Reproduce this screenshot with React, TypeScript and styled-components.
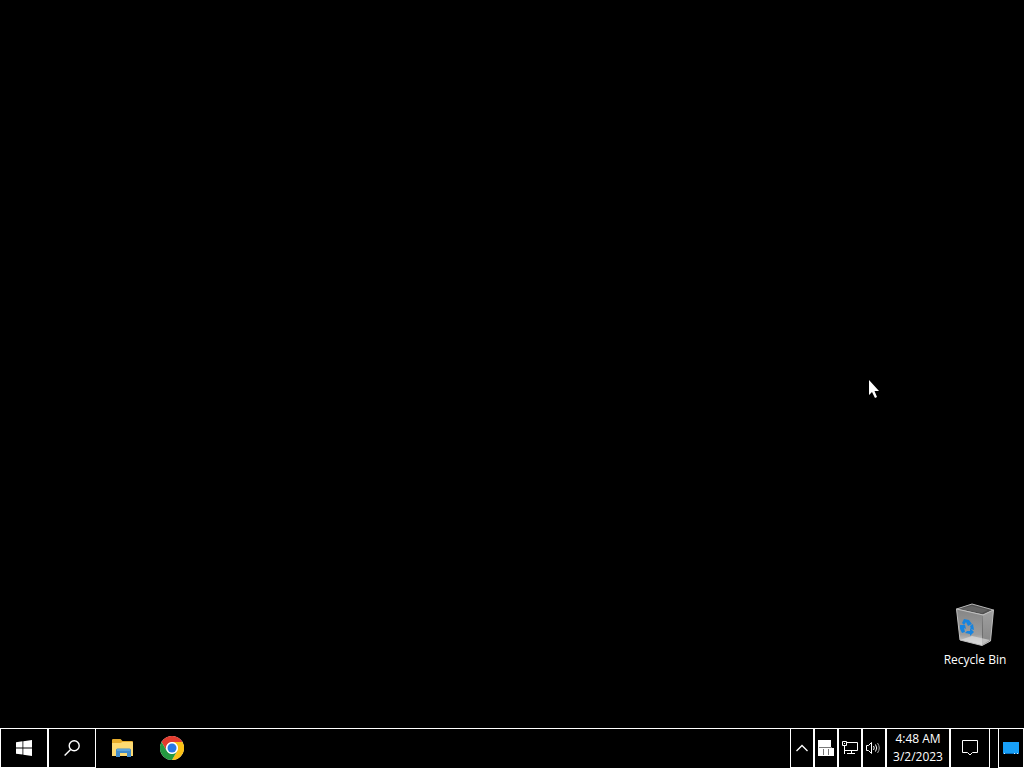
import React from "react";
import styled, { createGlobalStyle } from "styled-components";

const GlobalStyle = createGlobalStyle`
  * { box-sizing: border-box; }
  body { margin: 0; background: #000; overflow: hidden; }
  svg { display: block; }
`;

const Screen = styled.div`
  display: flex;
  flex-direction: column;
  min-height: 100vh;
  color: #fff;
  background: #000;
  font-family: "Open Sans", "Noto Sans", sans-serif;
  font-size: 12px;
  cursor: default;
`;

const Desktop = styled.main`
  position: relative;
  flex: 1;
`;

const DesktopItem = styled.button`
  position: absolute;
  right: 11px;
  bottom: 58px;
  display: flex;
  flex-direction: column;
  align-items: center;
  width: 76px;
  gap: 3px;
  padding: 0;
  border: 0;
  background: none;
  color: #fff;
  font: 12px/20px "Open Sans", "Noto Sans", sans-serif;
  white-space: nowrap;
`;

const Pointer = styled.svg`
  position: absolute;
  left: 868px;
  top: 379px;
`;

const Taskbar = styled.footer`
  display: flex;
  height: 40px;
  border-top: 1px solid #fff;
`;

const Cell = styled.button<{ $width: number }>`
  display: flex;
  align-items: center;
  justify-content: center;
  width: ${(p) => p.$width}px;
  padding: 0;
  border: solid #fff;
  border-width: 0 1px 1px;
  background: #000;
  color: #fff;
`;

const PinnedApps = styled.nav`
  display: flex;
  flex: 1;
  padding-left: 2px;
`;

const PinnedApp = styled.button`
  display: flex;
  align-items: center;
  justify-content: center;
  width: 49px;
  padding: 0 0 1px;
  border: 0;
  background: none;
`;

const Tray = styled.div`
  display: flex;
`;

const Clock = styled(Cell)`
  flex-direction: column;
  font: 12px/18px "Open Sans", "Noto Sans", sans-serif;
  white-space: nowrap;
`;

const PeekCell = styled(Cell)`
  margin-left: 8px;
`;

const WindowsLogo = () => (
  <svg width="16" height="16" viewBox="0 0 16 16" fill="#fff">
    <path d="M0 2.2 6.5 1.3V7.5H0ZM7.3 1.2 16 0V7.5H7.3ZM0 8.4H6.5V14.6L0 13.7ZM7.3 8.4H16V16L7.3 14.8Z" />
  </svg>
);

const SearchIcon = () => (
  <svg width="16" height="16" viewBox="0 0 16 16" fill="none" stroke="#fff" strokeWidth="1.4">
    <circle cx="10.2" cy="5.8" r="5" />
    <path d="M6.6 9.4.6 15.4" />
  </svg>
);

const FolderIcon = () => (
  <svg width="22" height="20" viewBox="0 0 22 20">
    <path d="M0 2.2Q0 1 1 1H8.5L10.5 3H20Q21 3 21 4V18H0Z" fill="#e6ac2c" />
    <path d="M0 5H8.5L10.5 4H20Q21 4 21 5V18H0Z" fill="#fdda72" />
    <path d="M4 19V12Q4 10.5 5.5 10.5H17.5Q19 10.5 19 12V19H15V15H8V19Z" fill="#428cca" />
    <path d="M5 11H18V13H5Z" fill="#5ba4dc" />
  </svg>
);

const ChromeIcon = () => (
  <svg width="24" height="24" viewBox="0 0 48 48">
    <circle cx="24" cy="24" r="24" fill="#fff" />
    <path d="M3.2 12A24 24 0 0 1 44.8 12H24A12 12 0 0 0 13.6 30Z" fill="#e33b2e" />
    <path d="M44.8 12A24 24 0 0 1 24 48L34.4 30A12 12 0 0 0 24 12Z" fill="#fbc116" />
    <path d="M24 48A24 24 0 0 1 3.2 12L13.6 30A12 12 0 0 0 34.4 30Z" fill="#249a41" />
    <circle cx="24" cy="24" r="11.5" fill="#fff" />
    <circle cx="24" cy="24" r="9" fill="#2878e6" />
  </svg>
);

const ChevronIcon = () => (
  <svg width="12" height="8" viewBox="0 0 12 8" fill="none" stroke="#fff" strokeWidth="1.3">
    <path d="M.5 7 6 1.5 11.5 7" />
  </svg>
);

const DeviceIcon = () => (
  <svg width="16" height="16" viewBox="0 0 16 16">
    <path d="M0 0H13V8H16V16H0Z" fill="#fff" />
    <path d="M1 7.5H14M5.5 9V15M10.5 9V15" stroke="#777" />
  </svg>
);

const NetworkIcon = () => (
  <svg width="16" height="14" viewBox="0 0 16 14" fill="none" stroke="#fff">
    <path d="M5 1.5H15.5V9.5H2.5V5M.5.5H4.5V4.5H.5ZM2 2.5H3M2.5 9V13M9.5 10V12.5M5 12.5H13" />
  </svg>
);

const VolumeIcon = () => (
  <svg width="16" height="14" viewBox="0 0 16 14" fill="none" stroke="#fff">
    <path d="M.5 4.5H2.5L5.5 1.5V12.5L2.5 9.5H.5Z" />
    <path d="M7.5 5Q9 7 7.5 9M9.5 3.5Q12 7 9.5 10.5" />
    <path d="M11.5 2Q15 7 11.5 12" stroke="#aaa" />
  </svg>
);

const NotificationIcon = () => (
  <svg width="16" height="16" viewBox="0 0 16 16" fill="none" stroke="#fff">
    <path d="M.5.5H15.5V12.5H10.5L8 15 5.5 12.5H.5Z" />
  </svg>
);

const DesktopPeekIcon = () => (
  <svg width="16" height="12" viewBox="0 0 16 12">
    <path d="M0 0H16V12H0Z" fill="#18a0f8" />
    <path d="M0 11.5H16" stroke="#0870c0" />
    <path d="M1 11.5H2M11 11.5H12M14 11.5H15" stroke="#d8f0ff" />
  </svg>
);

const RecycleBinIcon = () => (
  <svg width="40" height="44" viewBox="0 0 40 44">
    <defs>
      <linearGradient id="front" x1="0" y1="0" x2="0" y2="1">
        <stop offset="0" stopColor="#858585" />
        <stop offset="0.7" stopColor="#9d9d9d" />
        <stop offset="1" stopColor="#d8d8d8" />
      </linearGradient>
      <linearGradient id="side" x1="0" y1="0" x2="0" y2="1">
        <stop offset="0" stopColor="#a0a0a0" />
        <stop offset="1" stopColor="#858585" />
      </linearGradient>
    </defs>
    <path d="M1.5 6 17 1 38.5 7 28 12Z" fill="#505050" stroke="#b8b8b8" />
    <path d="M5 6 17 3 33 7 27 10Z" fill="#626262" />
    <path d="M1.5 6 28 12 27 42.5 5 37Z" fill="url(#front)" />
    <path d="M28 12 38.5 7 35.5 38 27 42.5Z" fill="url(#side)" />
    <path d="M5 37 17 33 35 37 27 42Z" fill="#dedede" opacity="0.65" />
    <path d="M1.5 6 28 12 38.5 7 35.5 38 27 42.5 5 37Z" fill="none" stroke="#c0c0c0" />
    <g fill="#1684df">
      <path d="M7 20 9 16 14 17 17 21 13 23 11 19 9 22Z" />
      <path d="M5 22 10 22 11 26 9 25 10 29 7 30 5 26Z" />
      <path d="M12 28 15 28 15 25 19 29 15 33 15 31 10 30Z" />
      <path d="M15 23 18 21 19 27 16 26Z" />
    </g>
  </svg>
);

export default function App() {
  return (
    <Screen>
      <GlobalStyle />
      <Desktop>
        <DesktopItem>
          <RecycleBinIcon />
          <span>Recycle Bin</span>
        </DesktopItem>
        <Pointer width="12" height="20" viewBox="0 0 12 20" aria-hidden="true">
          <path d="M1 1V16L4 13 7 19 9 18 6.5 12H11Z" fill="#fff" />
        </Pointer>
      </Desktop>
      <Taskbar>
        <Cell $width={48} aria-label="Start"><WindowsLogo /></Cell>
        <Cell $width={48} aria-label="Search"><SearchIcon /></Cell>
        <PinnedApps>
          <PinnedApp aria-label="File Explorer"><FolderIcon /></PinnedApp>
          <PinnedApp aria-label="Google Chrome"><ChromeIcon /></PinnedApp>
        </PinnedApps>
        <Tray>
          <Cell $width={24} aria-label="Show hidden icons"><ChevronIcon /></Cell>
          <Cell $width={24} aria-label="Devices"><DeviceIcon /></Cell>
          <Cell $width={24} aria-label="Network"><NetworkIcon /></Cell>
          <Cell $width={24} aria-label="Volume"><VolumeIcon /></Cell>
          <Clock $width={64}>
            <span>4:48 AM</span>
            <span>3/2/2023</span>
          </Clock>
          <Cell $width={40} aria-label="Notifications"><NotificationIcon /></Cell>
          <PeekCell $width={26} aria-label="Show desktop"><DesktopPeekIcon /></PeekCell>
        </Tray>
      </Taskbar>
    </Screen>
  );
}
